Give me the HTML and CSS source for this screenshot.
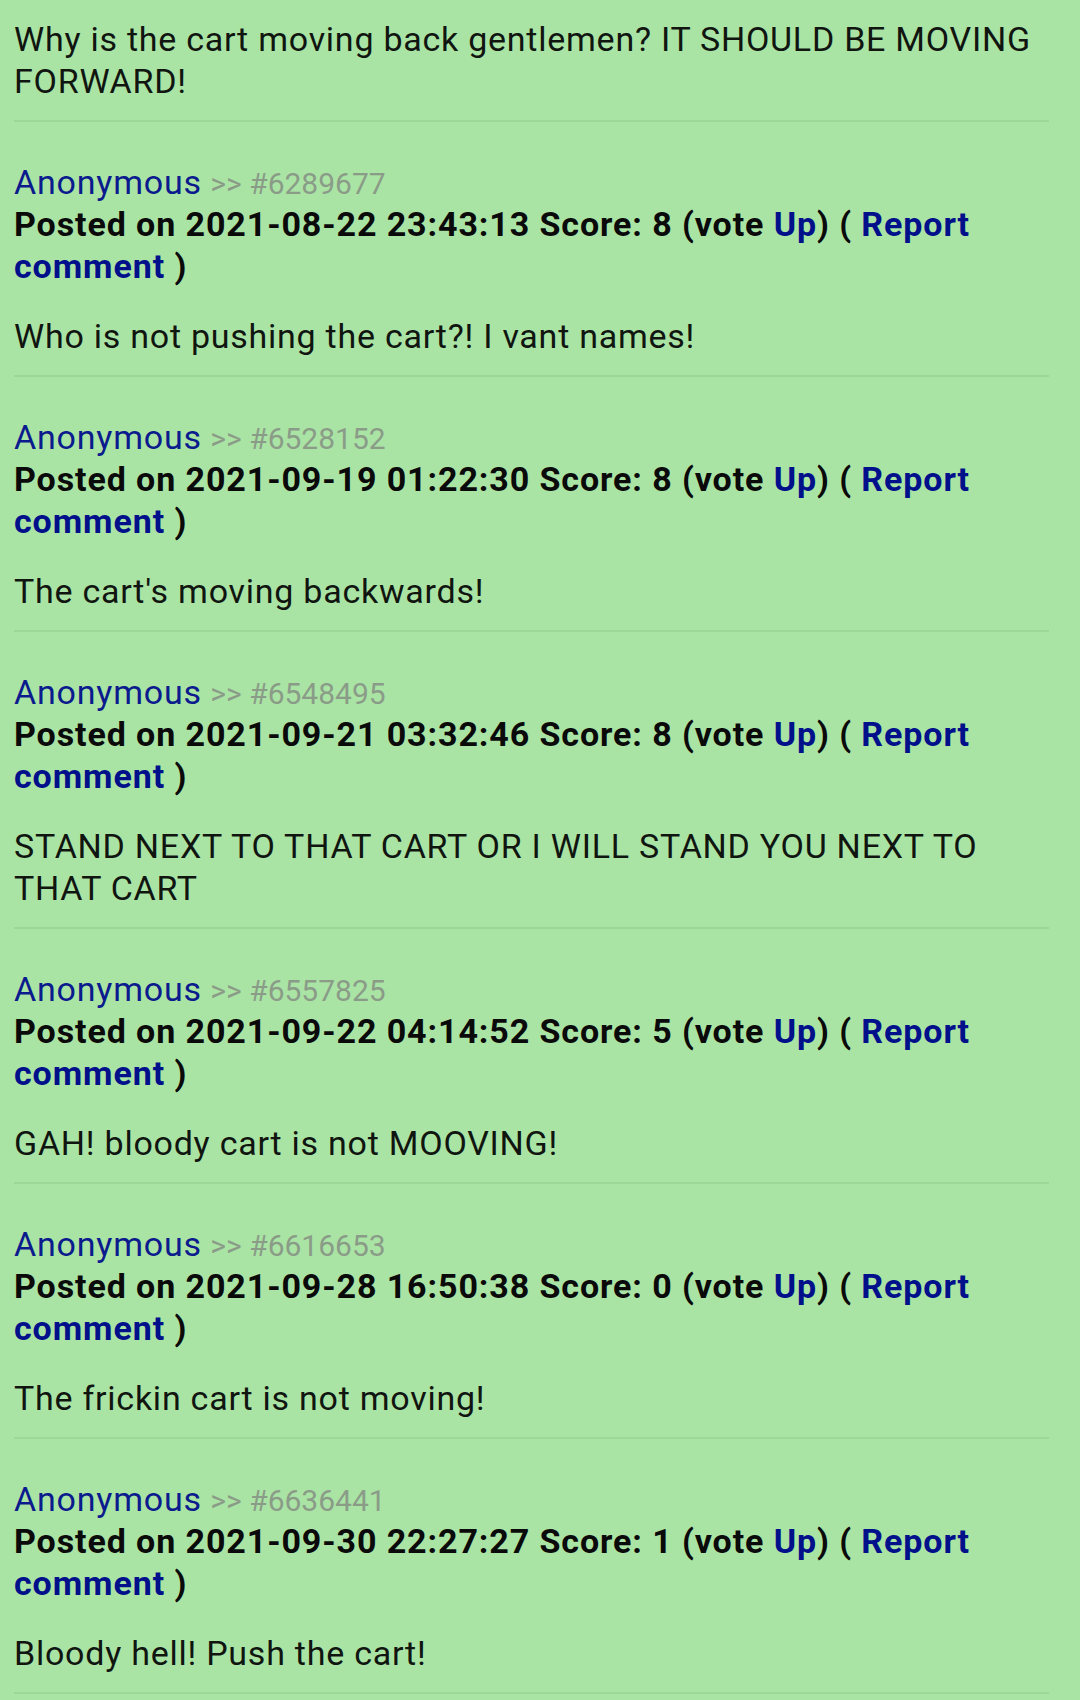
FILE: index.html
```html
<!DOCTYPE html>
<html lang="en">
<head>
  <meta charset="UTF-8">
  <title>Comments</title>
  <link rel="stylesheet" href="styles.css">
</head>
<body>

  <div class="thread">

    <div class="comment first">
      <p class="body">Why is the cart moving back gentlemen? IT SHOULD BE MOVING FORWARD!</p>
    </div>

    <div class="comment">
      <div class="head"><a class="name">Anonymous</a> <span class="ref">&gt;&gt; #6289677</span></div>
      <div class="meta">Posted on 2021-08-22 23:43:13 Score: 8 (vote <a class="link">Up</a>) ( <a class="link">Report</a> <a class="link">comment</a> )</div>
      <p class="body">Who is not pushing the cart?! I vant names!</p>
    </div>

    <div class="comment">
      <div class="head"><a class="name">Anonymous</a> <span class="ref">&gt;&gt; #6528152</span></div>
      <div class="meta">Posted on 2021-09-19 01:22:30 Score: 8 (vote <a class="link">Up</a>) ( <a class="link">Report</a> <a class="link">comment</a> )</div>
      <p class="body">The cart's moving backwards!</p>
    </div>

    <div class="comment">
      <div class="head"><a class="name">Anonymous</a> <span class="ref">&gt;&gt; #6548495</span></div>
      <div class="meta">Posted on 2021-09-21 03:32:46 Score: 8 (vote <a class="link">Up</a>) ( <a class="link">Report</a> <a class="link">comment</a> )</div>
      <p class="body">STAND NEXT TO THAT CART OR I WILL STAND YOU NEXT TO THAT CART</p>
    </div>

    <div class="comment">
      <div class="head"><a class="name">Anonymous</a> <span class="ref">&gt;&gt; #6557825</span></div>
      <div class="meta">Posted on 2021-09-22 04:14:52 Score: 5 (vote <a class="link">Up</a>) ( <a class="link">Report</a> <a class="link">comment</a> )</div>
      <p class="body">GAH! bloody cart is not MOOVING!</p>
    </div>

    <div class="comment">
      <div class="head"><a class="name">Anonymous</a> <span class="ref">&gt;&gt; #6616653</span></div>
      <div class="meta">Posted on 2021-09-28 16:50:38 Score: 0 (vote <a class="link">Up</a>) ( <a class="link">Report</a> <a class="link">comment</a> )</div>
      <p class="body">The frickin cart is not moving!</p>
    </div>

    <div class="comment">
      <div class="head"><a class="name">Anonymous</a> <span class="ref">&gt;&gt; #6636441</span></div>
      <div class="meta">Posted on 2021-09-30 22:27:27 Score: 1 (vote <a class="link">Up</a>) ( <a class="link">Report</a> <a class="link">comment</a> )</div>
      <p class="body">Bloody hell! Push the cart!</p>
    </div>

  </div>

</body>
</html>
```

FILE: styles.css
```css
/* Reset */
* {
  margin: 0;
  padding: 0;
  box-sizing: border-box;
}

body {
  background: #aae4a5;
  color: #111;
  font-family: Roboto, 'Noto Sans', sans-serif;
  font-size: 34px;
  line-height: 42px;
  overflow: hidden;
}

.thread {
  padding: 18px 31px 0 14px;
}

/* One comment, closed by a faint rule */
.comment {
  padding: 39px 0 18px;
  border-bottom: 2px solid #9dd698;
}

.comment.first {
  padding-top: 0;
}

.head {
  height: 42px;
}

.head .name {
  color: #0b1a8c;
  letter-spacing: 0.8px;
}

.head .ref {
  color: #8a9c88;
  font-size: 30px;
  line-height: 30px;
}

.meta {
  font-weight: bold;
  color: #0a0a0a;
  letter-spacing: 0.9px;
}

.meta .link {
  color: #00108a;
}

.body {
  margin-top: 28px;
  color: #101510;
  letter-spacing: 0.75px;
}

.comment.first .body {
  margin-top: 0;
}
```
